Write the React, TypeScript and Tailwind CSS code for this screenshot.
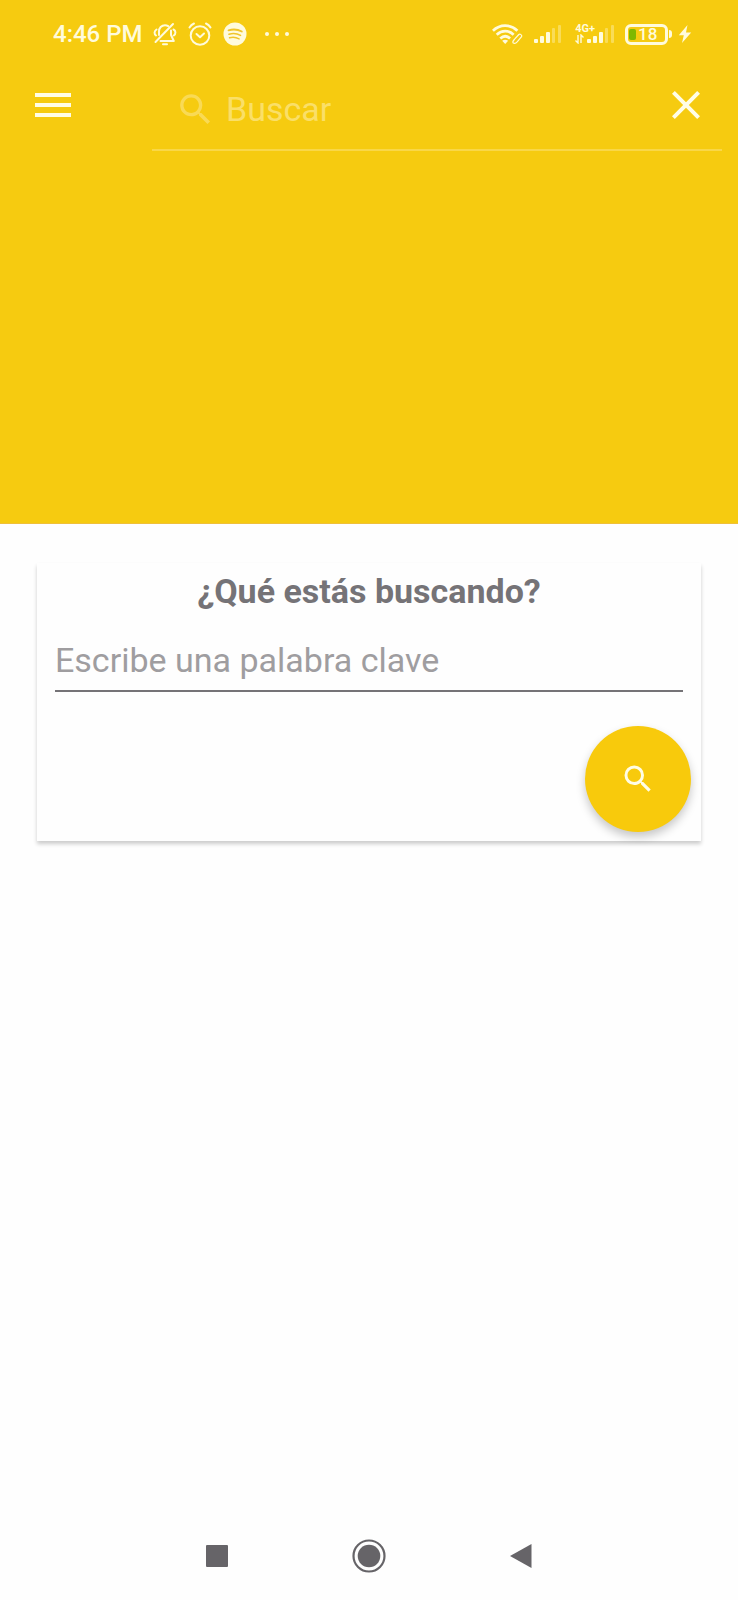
import React from "react";

const signalBars = [
  { x: 0, y: 14, height: 4 },
  { x: 6, y: 11, height: 7 },
  { x: 12, y: 7, height: 11 },
  { x: 18, y: 3, height: 15 },
  { x: 24, y: 0, height: 18 },
];

const SignalIcon: React.FC<{ level: number }> = ({ level }) => (
  <svg className="w-[27px] h-[18px]" viewBox="0 0 27 18" fill="currentColor">
    {signalBars.map((bar, i) => (
      <rect
        key={bar.x}
        x={bar.x}
        y={bar.y}
        width={i < level ? 4 : 3}
        height={bar.height}
        rx="1"
        opacity={i < level ? 1 : 0.35}
      />
    ))}
  </svg>
);

const SearchIcon: React.FC<{ className: string }> = ({ className }) => (
  <svg className={className} viewBox="0 0 24 24" fill="currentColor">
    <path d="M15.5 14h-.79l-.28-.27A6.471 6.471 0 0 0 16 9.5 6.5 6.5 0 1 0 9.5 16c1.61 0 3.09-.59 4.23-1.57l.27.28v.79l5 4.99L20.49 19l-4.99-5zm-6 0C7.01 14 5 11.99 5 9.5S7.01 5 9.5 5 14 7.01 14 9.5 11.99 14 9.5 14z" />
  </svg>
);

const BellOffIcon = () => (
  <svg
    className="w-6 h-6"
    viewBox="0 0 24 24"
    fill="none"
    stroke="currentColor"
    strokeWidth="2"
    strokeLinecap="round"
    strokeLinejoin="round"
  >
    <path d="M2.500 20 20 2" />
    <path d="M6 13V9.500C6 6 8.500 3.200 12 3.200c1.200 0 2.200.3 3.200.9" />
    <path d="M18 8.500V13l2.800 6H7.500" />
    <path d="M10 22.300h4" />
    <path d="M3.500 7.500C1 9 1 12 3 13.500M20.500 7.500c2.500 1.200 2.500 4.500.3 6" />
  </svg>
);

const AlarmIcon = () => (
  <svg
    className="w-6 h-6"
    viewBox="0 0 24 24"
    fill="none"
    stroke="currentColor"
    strokeWidth="2"
    strokeLinecap="round"
    strokeLinejoin="round"
  >
    <circle cx="12" cy="13.500" r="9.300" />
    <path d="m8.500 12 3.500 3.200L16 11.500" />
    <path d="M1.500 5.500C2.500 3.700 4 2.300 6 1.500M22.500 5.500C21.500 3.700 20 2.300 18 1.500" />
  </svg>
);

const MusicIcon = () => (
  <svg className="w-6 h-6" viewBox="0 0 24 24">
    <circle cx="12" cy="12" r="11.500" fill="currentColor" />
    <g fill="none" stroke="#f0c52a" strokeLinecap="round">
      <path d="M5.500 8.300c4.500-1.300 9.500-.9 13.300 1.200" strokeWidth="1.800" />
      <path d="M6 12.200c4-1.100 8.200-.7 11.500 1.200" strokeWidth="1.600" />
      <path d="M6.500 15.800c3.300-.9 6.700-.5 9.600 1.100" strokeWidth="1.400" />
    </g>
  </svg>
);

const WifiIcon = () => (
  <svg
    className="w-8 h-6"
    viewBox="0 0 34 24"
    fill="none"
    stroke="currentColor"
  >
    <g strokeWidth="2.900">
      <path d="M1 8.500c7.500-7.300 18.500-7.300 26 0" />
      <path d="M5 12.700c5.300-5 12.700-5 18 0" />
      <path d="M8.800 16.700c3.200-2.900 7.200-2.900 10.400 0" />
    </g>
    <path d="M10.800 19.300c2-1.600 4.400-1.600 6.400 0L14 22.700z" fill="currentColor" stroke="none" />
    <path
      d="m24 17.500 4.500-5c1.200-1.200 4 .8 2.900 2.400L27 20c-1.500 1.800-3.500 2-4.500 1.500-.8-1.200 0-2.700 1.500-4z"
      strokeWidth="1.300"
    />
  </svg>
);

const StatusBar = () => (
  <div className="flex items-center justify-between h-[66px] pt-[2px] pl-[53px] pr-[46px] text-[#fffbdc]">
    <div className="flex items-center">
      <span className="text-2xl font-medium">4:46 PM</span>
      <div className="flex items-center gap-[11px] ml-[10px]">
        <BellOffIcon />
        <AlarmIcon />
        <MusicIcon />
      </div>
      <div className="flex gap-[6px] ml-[18px]">
        <span className="w-1 h-1 rounded-full bg-current" />
        <span className="w-1 h-1 rounded-full bg-current" />
        <span className="w-1 h-1 rounded-full bg-current" />
      </div>
    </div>

    <div className="flex items-center">
      <WifiIcon />
      <div className="ml-[10px]">
        <SignalIcon level={3} />
      </div>
      <div className="flex flex-col ml-[14px]">
        <span className="h-[10px] text-[11px] leading-[10px] font-bold">4G+</span>
        <svg
          className="w-3 h-[10px]"
          viewBox="0 0 12 10"
          fill="none"
          stroke="currentColor"
          strokeWidth="1.400"
        >
          <path d="M3 1v8L.5 6.500M6 9V1l2.500 2.500" />
        </svg>
      </div>
      <div className="-ml-2">
        <SignalIcon level={3} />
      </div>
      <div className="flex items-center ml-[11px]">
        <div className="flex items-center w-[43px] h-[21px] pl-px border-[3px] border-current rounded-[6px]">
          <span className="w-[7px] h-[11px] rounded-[2px] bg-[#7fb800]" />
          <span className="ml-[2px] text-[17px] leading-[15px] font-medium">18</span>
        </div>
        <span className="w-[3px] h-2 ml-px rounded-r-full bg-current" />
      </div>
      <svg className="w-[14px] h-5 ml-[6px]" viewBox="0 0 14 20" fill="currentColor">
        <path d="M9.500 1 .8 11.300h5L4 19l9.200-10.500H8z" />
      </svg>
    </div>
  </div>
);

const Toolbar = () => (
  <div className="flex items-start justify-between pl-[29px] pr-4">
    <button type="button" aria-label="Menú" className="flex items-center h-[78px] text-[#fffde6]">
      <svg className="w-12 h-12" viewBox="0 0 24 24" fill="currentColor">
        <path d="M3 18h18v-2H3v2zm0-5h18v-2H3v2zm0-7v2h18V6H3z" />
      </svg>
    </button>
    <div className="flex items-start flex-1 h-[85px] ml-[75px] pl-[23px] pr-3 border-b-2 border-[#f9d748]">
      <label className="flex items-center flex-1 min-w-0 h-full pt-[3px] text-[#f9da55]">
        <SearchIcon className="w-[41px] h-[41px] shrink-0" />
        <input
          type="search"
          placeholder="Buscar"
          aria-label="Buscar"
          className="flex-1 min-w-0 h-12 ml-[10px] text-[34px] bg-transparent outline-none placeholder:text-[#fadf68]"
        />
      </label>
      <button type="button" aria-label="Cerrar" className="flex items-center h-[78px] text-[#fffde6]">
        <svg className="w-12 h-12" viewBox="0 0 24 24" fill="currentColor">
          <path d="M19 6.410 17.590 5 12 10.590 6.410 5 5 6.410 10.590 12 5 17.590 6.410 19 12 13.410 17.590 19 19 17.590 13.410 12z" />
        </svg>
      </button>
    </div>
  </div>
);

const SearchCard = () => (
  <form
    className="mx-[37px] mt-[39px] pt-2 pb-[9px] bg-[#fefefe] shadow-[0_3px_4px_rgba(0,0,0,0.2)]"
    onSubmit={(e) => e.preventDefault()}
  >
    <div className="px-[18px]">
      <label
        htmlFor="keyword"
        className="block text-center text-[34px] leading-10 font-bold text-[#757377]"
      >
        ¿Qué estás buscando?
      </label>
      <input
        id="keyword"
        type="text"
        placeholder="Escribe una palabra clave"
        className="block w-full h-[60px] mt-[21px] pt-2 pb-[10px] text-[34px] border-b-2 border-[#757377] outline-none placeholder:text-[#9f9da0]"
      />
    </div>
    <div className="flex justify-end mt-[34px] pr-[10px]">
      <button
        type="submit"
        aria-label="Buscar"
        className="flex items-center justify-center w-[106px] h-[106px] rounded-full bg-[#f8ca0c] text-[#fffde6] shadow-[0_5px_10px_rgba(0,0,0,0.22)]"
      >
        <SearchIcon className="w-9 h-9" />
      </button>
    </div>
  </form>
);

const NavigationBar = () => (
  <nav className="flex items-center justify-center gap-[104px] h-[88px] mt-auto text-[#666468]">
    <button type="button" aria-label="Recientes" className="flex items-center justify-center w-12 h-12">
      <span className="w-[22px] h-[22px] rounded-[1px] bg-current" />
    </button>
    <button type="button" aria-label="Inicio" className="flex items-center justify-center w-12 h-12">
      <svg className="w-[34px] h-[34px]" viewBox="0 0 34 34">
        <circle cx="17" cy="17" r="15.500" fill="none" stroke="currentColor" strokeWidth="2.200" />
        <circle cx="17" cy="17" r="11.300" fill="currentColor" />
      </svg>
    </button>
    <button type="button" aria-label="Atrás" className="flex items-center justify-center w-12 h-12">
      <svg className="w-[22px] h-6" viewBox="0 0 22 24" fill="currentColor">
        <path d="M21.500 0v24L0 12z" />
      </svg>
    </button>
  </nav>
);

export default function App() {
  return (
    <div className="flex flex-col min-h-screen bg-[#fefefe] font-['Roboto',sans-serif]">
      <header className="min-h-[524px] bg-[#f6cb10] border-b border-[#efc03a]">
        <StatusBar />
        <Toolbar />
      </header>
      <main>
        <SearchCard />
      </main>
      <NavigationBar />
    </div>
  );
}
